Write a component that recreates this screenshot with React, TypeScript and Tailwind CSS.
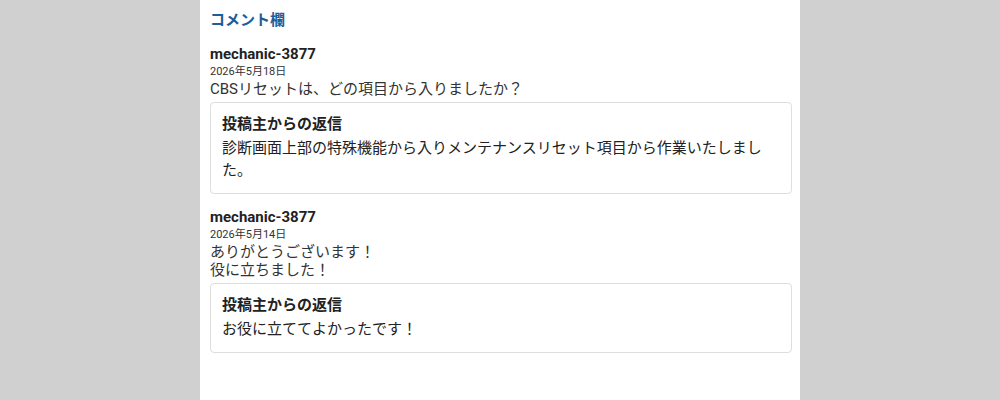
import React from 'react';

interface Comment {
  id: number;
  user: string;
  date: string;
  body: string[];
  reply: string[];
}

const COMMENTS: Comment[] = [
  {
    id: 1,
    user: 'mechanic-3877',
    date: '2026年5月18日',
    body: ['CBSリセットは、どの項目から入りましたか？'],
    reply: ['診断画面上部の特殊機能から入りメンテナンスリセット項目から作業いたしまし', 'た。'],
  },
  {
    id: 2,
    user: 'mechanic-3877',
    date: '2026年5月14日',
    body: ['ありがとうございます！', '役に立ちました！'],
    reply: ['お役に立ててよかったです！'],
  },
];

function CommentItem({ comment }: { comment: Comment }) {
  return (
    <div className="mb-[14px]">
      <p className="text-[15px] leading-[18px] font-bold text-[#222]">{comment.user}</p>
      <p className="text-[11px] leading-[17px] text-[#333]">{comment.date}</p>
      {comment.body.map((line, i) => (
        <p key={i} className="text-[15px] leading-[18px] text-[#333]">
          {line}
        </p>
      ))}
      {/* reply from the post author */}
      <div className="mt-[4px] rounded-[4px] border border-[#dedede] bg-white px-[11px] pt-[11px] pb-[12px]">
        <p className="text-[15px] leading-[20px] font-bold text-[#222]">投稿主からの返信</p>
        <div className="mt-[3px]">
          {comment.reply.map((line, i) => (
            <p key={i} className="text-[15px] leading-[22px] text-[#222]">
              {line}
            </p>
          ))}
        </div>
      </div>
    </div>
  );
}

export default function App() {
  return (
    <div
      className="flex min-h-[400px] w-full justify-center bg-[#d0d0d0]"
      style={{ fontFamily: 'Roboto, "Noto Sans CJK JP", sans-serif' }}
    >
      <div className="w-[600px] bg-white pt-[10px] pl-[10px] pr-[8px]">
        <h2 className="mb-[15px] text-[15px] leading-[20px] font-bold text-[#1c5d99]">コメント欄</h2>
        {COMMENTS.map((c) => (
          <CommentItem key={c.id} comment={c} />
        ))}
      </div>
    </div>
  );
}
